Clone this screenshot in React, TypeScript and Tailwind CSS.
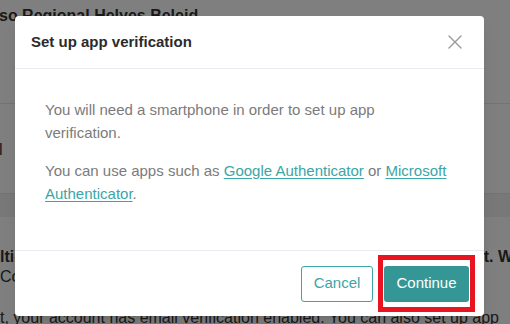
import { X } from "lucide-react";

export default function App() {
  return (
    <div className="relative h-[324px] w-[510px] overflow-hidden bg-white font-['Liberation_Sans',Arial,sans-serif] text-[#333]">
      {/* Page behind the dialog */}
      <div className="h-[104px] border-b border-[#e6e6e6] pt-[6px]">
        <h2 className="ml-[-1px] whitespace-nowrap text-[16px] font-bold leading-[20px]">
          so Regional Helyes Beleid
        </h2>
      </div>
      <div className="h-[90px] border-b border-[#e6e6e6] pt-[36px]">
        <p className="ml-[-1px] text-[16px] leading-[20px]">l</p>
      </div>
      <div className="h-[23px] bg-[#f1f1f1]" />
      <div className="pt-[30px]">
        <div className="flex justify-between whitespace-nowrap text-[16px] font-bold leading-[20px]">
          <span>lti-</span>
          <span className="mr-[-3px]">nt. W</span>
        </div>
        <p className="text-[16px] leading-[20px]">Co</p>
        <p className="mt-[21px] whitespace-nowrap text-[16px] leading-[20px]">
          t, your account has email verification enabled. You can also set up app
        </p>
      </div>

      {/* Dim overlay */}
      <div className="absolute inset-0 bg-black/50" />

      {/* Dialog */}
      <div className="absolute left-[15px] top-[16px] flex h-[300px] w-[469px] flex-col rounded-[4px] bg-white shadow-lg">
        <div className="flex h-[53px] items-center justify-between border-b border-[#e8ebef] pl-[16px] pr-[17px]">
          <h3 className="text-[15px] font-bold text-[#2b2b2b]">Set up app verification</h3>
          <X size={24} strokeWidth={1.4} color="#9a9a9a" />
        </div>

        <div className="flex-1 px-[30px] pt-[29px] text-[15px] leading-[23px] text-[#7b7b7b]">
          <p>You will need a smartphone in order to set up app verification.</p>
          <p className="mt-[15px]">
            You can use apps such as{" "}
            <a href="#" className="text-[#3aa6a6] underline underline-offset-2">
              Google Authenticator
            </a>{" "}
            or{" "}
            <a href="#" className="text-[#3aa6a6] underline underline-offset-2">
              Microsoft Authenticator
            </a>
            .
          </p>
        </div>

        <div className="flex h-[66px] items-center justify-end gap-[11px] border-t border-[#e8ebef] pr-[15px]">
          <button className="h-[36px] w-[72px] rounded-[3px] border border-[#3aa6a6] bg-white text-[15px] text-[#3aa6a6]">
            Cancel
          </button>
          <button className="h-[36px] w-[85px] rounded-[3px] bg-[#349796] text-[15px] text-white">
            Continue
          </button>
        </div>
      </div>

      {/* Highlight annotation */}
      <div className="absolute left-[378px] top-[255px] h-[57px] w-[97px] border-[5px] border-[#e8141f]" />
    </div>
  );
}
